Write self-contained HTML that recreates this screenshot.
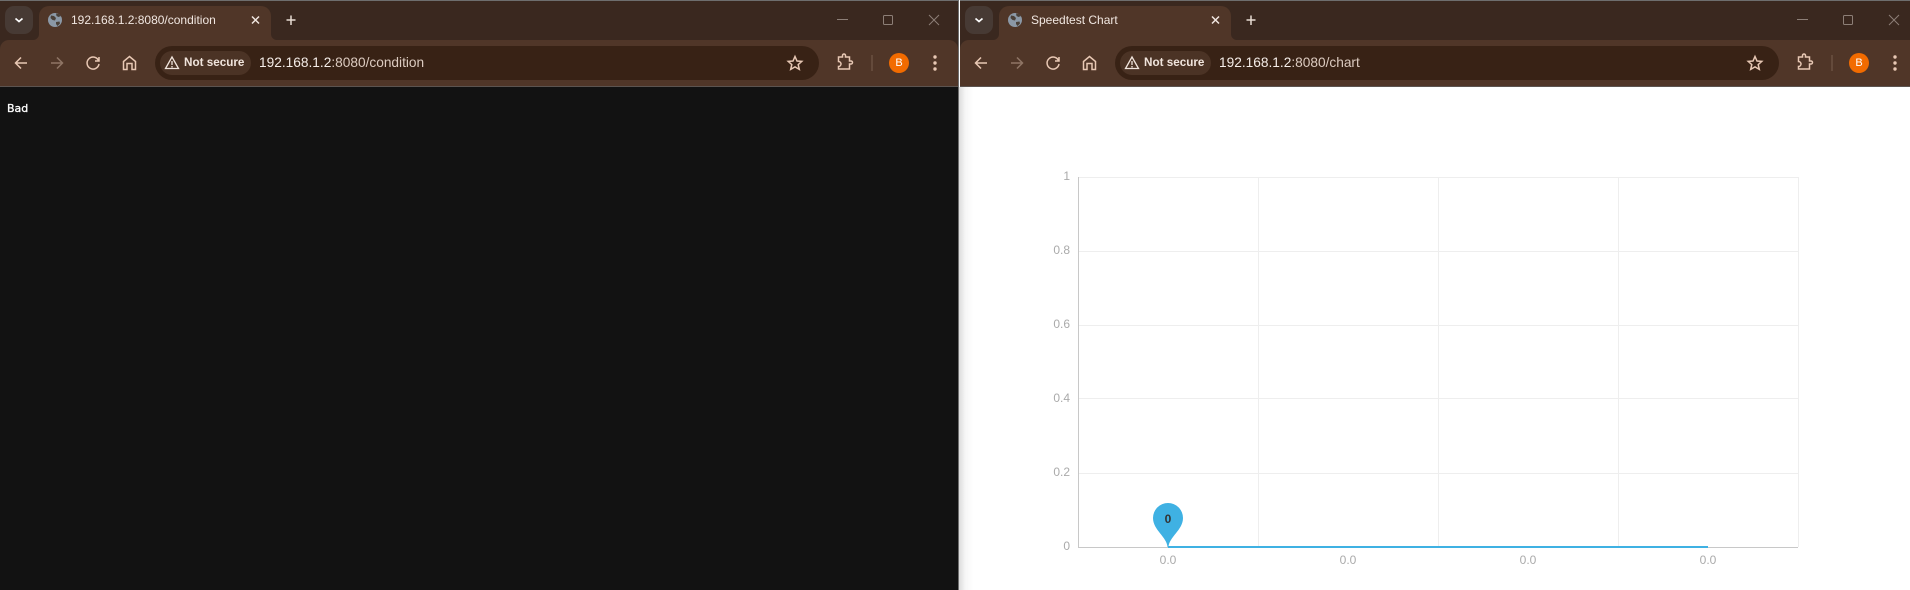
<!DOCTYPE html>
<html><head><meta charset="utf-8"><title>Speedtest</title>
<style>
html,body{margin:0;padding:0;width:1910px;height:590px;overflow:hidden;background:#121212;font-family:"Liberation Sans",sans-serif}
.win{position:absolute;top:0;height:590px;overflow:hidden}
.a{position:absolute}
.top{left:0;right:0;top:0;height:1px;background:#6e6e6e}
.strip{left:0;right:0;top:1px;height:50px;background:#3a281f}
.bar{left:0;right:0;top:40px;height:46px;background:#503628;border-radius:9px 9px 0 0}
.line{left:0;right:0;top:86px;height:1px;background:#5c5450}
.chev{left:5px;top:6px;width:28px;height:28px;border-radius:9px;background:#473a34}
.tab{left:39px;top:6px;width:232px;height:34px;background:#503628;border-radius:10px 10px 0 0}
.t{white-space:nowrap}
.title{left:71px;top:13px;font-size:12px;line-height:15px;color:#f1e7e1}
.omni{left:155px;top:46px;width:664px;height:34px;border-radius:17px;background:#382215}
.chip{left:160px;top:51px;width:91px;height:24px;border-radius:12px;background:#4b3325}
.ns{left:184px;top:56px;font-size:11.7px;line-height:14px;font-weight:bold;color:#f0e4dc}
.url{left:259px;top:55px;font-size:13.7px;line-height:16px;color:#f5ede8}
.url span{color:#dccbc0}
.av{left:889px;top:53px;width:20px;height:20px;border-radius:50%;background:#f26b00;color:#fff;font-size:11px;line-height:20px;text-align:center}
svg{position:absolute;left:0;top:0;overflow:visible}
.ic{fill:none;stroke:#e8c8b4;stroke-width:1.5}
.page{left:0;right:0;top:87px;bottom:0}
</style></head><body>

<div class="win" style="left:0;width:958px">
  <div class="a strip"></div><div class="a top"></div><div class="a bar"></div><div class="a line"></div>
  <div class="a chev"></div><div class="a tab"></div>
  <div class="a t title">192.168.1.2:8080/condition</div>
  <div class="a omni"></div><div class="a chip"></div>
  <div class="a t ns">Not secure</div>
  <div class="a t url">192.168.1.2<span>:8080/condition</span></div>
  <div class="a av">B</div>
  <svg width="958" height="90">
    <path d="M33 40h6v-6a6 6 0 0 1-6 6zM271 34v6h6a6 6 0 0 1-6-6z" fill="#503628"/>
    <path d="M15.500 18.500l3.500 3 3.500-3" fill="none" stroke="#fff" stroke-width="1.700"/>
    <circle cx="55" cy="20" r="7" fill="#8b98a6"/>
    <path d="M51 15.500l3 .5 2 2-1 2.500-2.500-.5-2-2zM56 13.500l3 .5 2 2-2.500 1-2-1zM56 22l3.500-.5.500 2-2.500 2.500-1.500-2z" fill="#4a4038"/>
    <path d="M252 16.500l7 7M259 16.500l-7 7" stroke="#f1e7e1" stroke-width="1.500"/>
    <path d="M291 15.500v9.500M286.500 20h9" stroke="#e8dcd4" stroke-width="1.500"/>
    <path d="M837 19.500h11" stroke="#8d7f77" stroke-width="1"/>
    <rect x="883.500" y="15.500" width="9" height="9" rx="1" fill="none" stroke="#8d7f77"/>
    <path d="M929 15l10 10M939 15l-10 10" stroke="#8d7f77"/>
    <path class="ic" d="M27 63H16M21 57.500L15.500 63l5.500 5.500"/>
    <path class="ic" style="stroke:#8f7565" d="M51 63h11M57 57.500L62.500 63 57 68.500"/>
    <path class="ic" d="M98.500 60.500a6 6 0 1 0 .5 3.500M99 57v4h-4"/>
    <path class="ic" d="M123.500 69.500v-8l6-5 6 5v8h-3.500v-6h-5v6z"/>
    <path d="M172 57l6.500 11.500h-13zM172 61v4M172 66v1.500" fill="none" stroke="#f0e4dc" stroke-width="1.300"/>
    <path class="ic" d="M795 56.500l2 4.500 4.800.4-3.600 3.200 1.100 4.800-4.300-2.500-4.300 2.500 1.100-4.800-3.600-3.200 4.800-.4z"/>
    <path class="ic" d="M839 57h3.500v-1.500a1.500 1.500 0 0 1 3 0V57h4v4h1.500a1.500 1.500 0 0 1 0 3h-1.500v5h-11v-2.500a2.500 2.500 0 0 0 0-5V57z"/>
    <path d="M872 55v16" stroke="#735848" stroke-width="1.200"/>
    <circle cx="935" cy="57" r="1.700" fill="#e8c8b4"/><circle cx="935" cy="63" r="1.700" fill="#e8c8b4"/><circle cx="935" cy="69" r="1.700" fill="#e8c8b4"/>
  </svg>
  <div class="a page" style="background:#121212"></div>
  <div class="a t" style="left:7px;top:102px;font-family:'DejaVu Sans',sans-serif;font-size:11px;line-height:13px;color:#fff;-webkit-text-stroke:.3px #fff">Bad</div>
</div>

<div class="a" style="left:958px;top:0;width:2px;height:590px;background:#6f6f6f"></div>

<div class="win" style="left:959px;width:951px;background:#fff">
  <div style="position:absolute;left:1px;top:0;width:950px;height:590px">
  <div class="a strip"></div><div class="a top"></div><div class="a bar" style="border-radius:9px 0 0 0"></div><div class="a line"></div>
  <div class="a chev"></div><div class="a tab"></div>
  <div class="a t title" style="left:71px">Speedtest Chart</div>
  <div class="a omni"></div><div class="a chip"></div>
  <div class="a t ns">Not secure</div>
  <div class="a t url">192.168.1.2<span>:8080/chart</span></div>
  <div class="a av">B</div>
  <svg width="950" height="90">
    <path d="M33 40h6v-6a6 6 0 0 1-6 6zM271 34v6h6a6 6 0 0 1-6-6z" fill="#503628"/>
    <path d="M15.500 18.500l3.500 3 3.500-3" fill="none" stroke="#fff" stroke-width="1.700"/>
    <circle cx="55" cy="20" r="7" fill="#8b98a6"/>
    <path d="M51 15.500l3 .5 2 2-1 2.500-2.500-.5-2-2zM56 13.500l3 .5 2 2-2.500 1-2-1zM56 22l3.500-.5.500 2-2.500 2.500-1.500-2z" fill="#4a4038"/>
    <path d="M252 16.500l7 7M259 16.500l-7 7" stroke="#f1e7e1" stroke-width="1.500"/>
    <path d="M291 15.500v9.500M286.500 20h9" stroke="#e8dcd4" stroke-width="1.500"/>
    <path d="M837 19.500h11" stroke="#8d7f77" stroke-width="1"/>
    <rect x="883.500" y="15.500" width="9" height="9" rx="1" fill="none" stroke="#8d7f77"/>
    <path d="M929 15l10 10M939 15l-10 10" stroke="#8d7f77"/>
    <path class="ic" d="M27 63H16M21 57.500L15.500 63l5.500 5.500"/>
    <path class="ic" style="stroke:#8f7565" d="M51 63h11M57 57.500L62.500 63 57 68.500"/>
    <path class="ic" d="M98.500 60.500a6 6 0 1 0 .5 3.500M99 57v4h-4"/>
    <path class="ic" d="M123.500 69.500v-8l6-5 6 5v8h-3.500v-6h-5v6z"/>
    <path d="M172 57l6.500 11.500h-13zM172 61v4M172 66v1.500" fill="none" stroke="#f0e4dc" stroke-width="1.300"/>
    <path class="ic" d="M795 56.500l2 4.500 4.800.4-3.600 3.200 1.100 4.800-4.300-2.500-4.300 2.500 1.100-4.800-3.600-3.200 4.800-.4z"/>
    <path class="ic" d="M839 57h3.500v-1.500a1.500 1.500 0 0 1 3 0V57h4v4h1.500a1.500 1.500 0 0 1 0 3h-1.500v5h-11v-2.500a2.500 2.500 0 0 0 0-5V57z"/>
    <path d="M872 55v16" stroke="#735848" stroke-width="1.200"/>
    <circle cx="935" cy="57" r="1.700" fill="#e8c8b4"/><circle cx="935" cy="63" r="1.700" fill="#e8c8b4"/><circle cx="935" cy="69" r="1.700" fill="#e8c8b4"/>
  </svg>
  </div>
  <div class="a" style="left:0;top:87px;width:14px;height:503px;background:linear-gradient(to right,#dcdcdc,#f6f6f6 45%,#fff)"></div>
</div>

<svg width="1910" height="590" style="font-family:'Liberation Sans',sans-serif">
  <g stroke="#eeeeee" stroke-width="1" fill="none">
    <path d="M1078 177.500H1798.500M1078 251.500H1798.500M1078 325.500H1798.500M1078 398.500H1798.500M1078 473.500H1798.500"/>
    <path d="M1258.500 177V547M1438.500 177V547M1618.500 177V547M1798.500 177V547"/>
  </g>
  <path d="M1078.500 177V547.500H1798" fill="none" stroke="#c8c8c8" stroke-width="1"/>
  <path d="M1168 547H1708" stroke="#3fb1e3" stroke-width="2"/>
  <path d="M1167.500 547C1167 537 1153 530 1153 518A15 15 0 0 1 1183 518C1183 530 1169 537 1168.500 547Z" fill="#3fb1e3"/>
  <text x="1168" y="523" font-size="12" font-weight="bold" text-anchor="middle" fill="#333">0</text>
  <g font-size="12" fill="#aaa" text-anchor="end">
    <text x="1070" y="180">1</text>
    <text x="1070" y="254">0.8</text>
    <text x="1070" y="328">0.6</text>
    <text x="1070" y="402">0.4</text>
    <text x="1070" y="476">0.2</text>
    <text x="1070" y="550">0</text>
  </g>
  <g font-size="12" fill="#aaa" text-anchor="middle">
    <text x="1168" y="564">0.0</text>
    <text x="1348" y="564">0.0</text>
    <text x="1528" y="564">0.0</text>
    <text x="1708" y="564">0.0</text>
  </g>
</svg>
</body></html>
